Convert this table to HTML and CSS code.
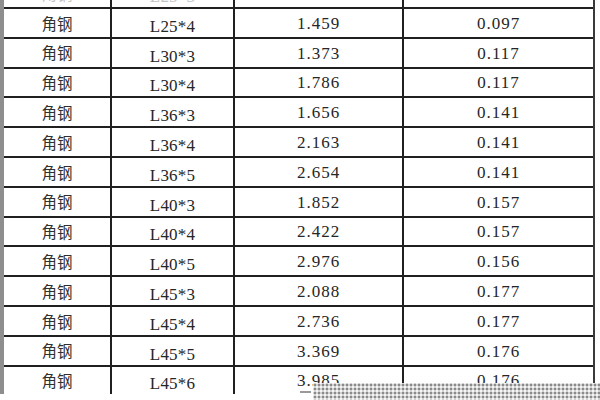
FILE: index.html
```html
<!DOCTYPE html>
<html lang="zh">
<head>
<meta charset="utf-8">
<title>角钢</title>
<link rel="stylesheet" href="styles.css">
</head>
<body>
<div class="page">
  <div class="sheet">
    <div class="c name faint">角钢</div><div class="c spec faint">L25*3</div><div class="c num faint">1.124</div><div class="c num faint">0.097</div>
    <div class="c name">角钢</div><div class="c spec">L25*4</div><div class="c num">1.459</div><div class="c num">0.097</div>
    <div class="c name">角钢</div><div class="c spec">L30*3</div><div class="c num">1.373</div><div class="c num">0.117</div>
    <div class="c name">角钢</div><div class="c spec">L30*4</div><div class="c num">1.786</div><div class="c num">0.117</div>
    <div class="c name">角钢</div><div class="c spec">L36*3</div><div class="c num">1.656</div><div class="c num">0.141</div>
    <div class="c name">角钢</div><div class="c spec">L36*4</div><div class="c num">2.163</div><div class="c num">0.141</div>
    <div class="c name">角钢</div><div class="c spec">L36*5</div><div class="c num">2.654</div><div class="c num">0.141</div>
    <div class="c name">角钢</div><div class="c spec">L40*3</div><div class="c num">1.852</div><div class="c num">0.157</div>
    <div class="c name">角钢</div><div class="c spec">L40*4</div><div class="c num">2.422</div><div class="c num">0.157</div>
    <div class="c name">角钢</div><div class="c spec">L40*5</div><div class="c num">2.976</div><div class="c num">0.156</div>
    <div class="c name">角钢</div><div class="c spec">L45*3</div><div class="c num">2.088</div><div class="c num">0.177</div>
    <div class="c name">角钢</div><div class="c spec">L45*4</div><div class="c num">2.736</div><div class="c num">0.177</div>
    <div class="c name">角钢</div><div class="c spec">L45*5</div><div class="c num">3.369</div><div class="c num">0.176</div>
    <div class="c name">角钢</div><div class="c spec">L45*6</div><div class="c num">3.985</div><div class="c num">0.176</div>
  </div>
  <div class="mark"></div>
  <div class="overlay"></div>
</div>
</body>
</html>
```

FILE: styles.css
```css
html, body {
  margin: 0;
  padding: 0;
  background: #ffffff;
}
.page {
  position: relative;
  width: 600px;
  height: 400px;
  overflow: hidden;
  background: #ffffff;
}
.sheet {
  display: grid;
  grid-template-columns: 106px 121px 167px 189px;
  grid-auto-rows: 27.8px;
  gap: 2px;
  width: max-content;
  margin-top: -20.8px;
  background: #202020;
  border-left: 4px solid #8e8e8e;
  border-right: 2px solid #3a3a3a;
}
.c {
  background: #ffffff;
  display: flex;
  align-items: center;
  justify-content: center;
  color: #262626;
  font-family: "Liberation Serif", "Noto Sans CJK SC", serif;
  font-size: 17px;
  line-height: 1;
}
.name {
  font-family: "Noto Sans CJK SC", sans-serif;
  font-size: 15.5px;
  font-weight: 400;
  color: #303030;
  padding-top: 1px;
  box-sizing: border-box;
}
.spec {
  padding-top: 7px;
  box-sizing: border-box;
  letter-spacing: 0.2px;
}
.num {
  letter-spacing: 1px;
  padding-top: 1px;
  box-sizing: border-box;
}
.faint {
  color: #c4c4c4;
}
.mark {
  position: absolute;
  left: 300px;
  top: 391px;
  width: 11px;
  height: 2px;
  background: #9a9a9a;
}
.overlay {
  position: absolute;
  left: 313px;
  top: 383px;
  width: 287px;
  height: 17px;
  background-color: #d2d2d2;
  background-image:
    radial-gradient(circle, #8a8a8a 0.8px, transparent 1.2px),
    radial-gradient(circle, #f4f4f4 0.8px, transparent 1.2px);
  background-size: 4px 4px, 4px 4px;
  background-position: 0 0, 2px 2px;
}
```
